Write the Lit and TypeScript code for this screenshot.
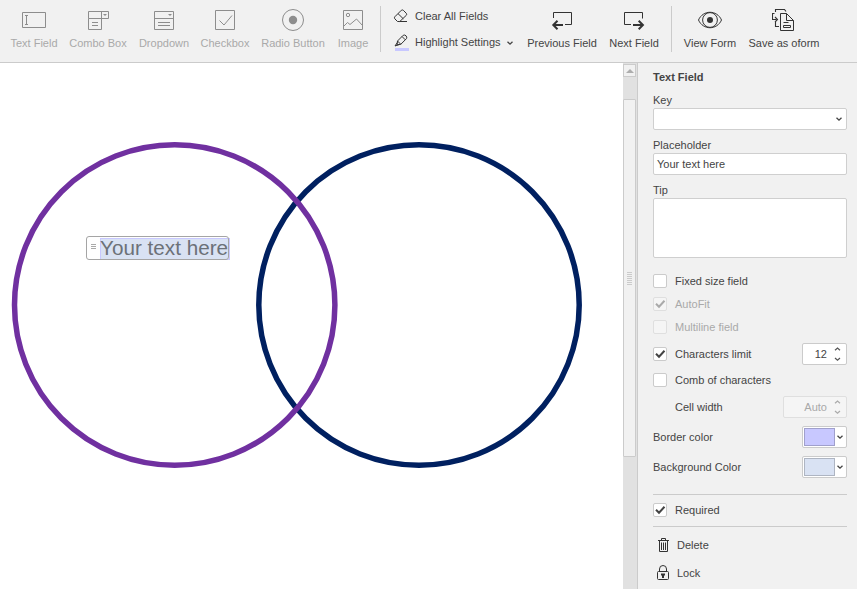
import { LitElement, html, svg, css } from "lit";
import { customElement } from "lit/decorators.js";
import { classMap } from "lit/directives/class-map.js";

const icons: Record<string, unknown> = {
  text: svg`<path d="M.5 4.500h23v15H.5zM3 7.500h3M3 16.500h3M4.500 7.500v9"/>`,
  combo: svg`<path d="M2.500 3.500h20v7h-20zM15.500 3.500v18h-13v-11M6 14.500h6M6 17.500h6"/><path class="soft" d="M17 6h4l-2 2z"/>`,
  drop: svg`<path d="M2.500 3.500h19v18h-19zM2.500 10.500h19M6 14.500h12M6 17.500h12"/><path class="soft" d="M16 6h4l-2 2z"/>`,
  check: svg`<path d="M2.500 2.500h19v19h-19z"/><path d="M6.500 12.500l4.500 4.500 8-9.500"/>`,
  radio: svg`<circle cx="12" cy="12" r="10.500"/><circle class="fill" cx="12" cy="12" r="4.200"/>`,
  image: svg`<path d="M2.500 2.500h19v19h-19z"/><circle cx="7" cy="7" r="1.700"/><path d="M3 18l3.500-3.500 2.500 2 6.500-5.500 6 6.500"/>`,
  prev: svg`<path d="M3.500 10V4.500h18v12H15"/><path class="bold" d="M13 17H4M7.500 12.800L3.300 17l4.200 4.200"/>`,
  next: svg`<path d="M9 16.500H2.500v-12h18v6"/><path class="bold" d="M11 17h9.500M16.700 12.800l4.200 4.200-4.200 4.200"/>`,
  eye: svg`<path d="M.5 12C5 1.700 19 1.700 23.500 12 19 22.300 5 22.300.5 12z"/><circle cx="12" cy="12" r="7.400"/><circle class="fill" cx="12" cy="12" r="3"/>`,
  save: svg`<path d="M8.500 5.500h6l7 7v10h-13zM14.500 5.500v7h7M11.500 14.500h5M11.500 17.500h7v2h-7z"/><path d="M14 3.500l-1.500-2h-9V4M3.500 14v4.500H7M2.500 5.500h-2v6h4M3 9l2.500 2.500L3 14" stroke-width="1.100"/>`,
};

const icon = (name: string) => html`<svg class="ico" viewBox="0 0 24 24">${icons[name]}</svg>`;

@customElement("app-root")
export class AppRoot extends LitElement {
  static styles = css`
    :host { display: flex; flex-direction: column; width: 857px; height: 589px; overflow: hidden;
      font: 11px/16px "Liberation Sans", Arial, sans-serif; color: #444; background: #fff; }
    * { box-sizing: border-box; }
    svg { display: block; fill: none; stroke: #333; flex: none; }
    .toolbar { display: flex; height: 63px; flex: none; background: #f1f1f1; border-bottom: 1px solid #cbcbcb; padding-left: 4px; }
    .tool { display: flex; flex-direction: column; align-items: center; padding-top: 8px; white-space: nowrap; }
    .tool span { margin-top: 3px; }
    .ico { width: 24px; height: 24px; }
    .ico .fill { fill: #333; stroke: none; }
    .ico .bold { stroke-width: 2; }
    .off { color: #a9a9a9; }
    .off svg { stroke: #8d8d8d; }
    .off .ico .fill { fill: #8d8d8d; }
    .off .soft { fill: #8d8d8d; stroke: none; }
    .w60 { width: 60px; } .w68 { width: 68px; } .w64 { width: 64px; } .w58 { width: 58px; }
    .w78 { width: 78px; } .w42 { width: 42px; } .w72 { width: 72px; } .w52 { width: 52px; margin-left: 10px; }
    .w56 { width: 56px; } .w76 { width: 76px; margin-left: 8px; }
    .sep { width: 1px; height: 46px; background: #cbcbcb; margin: 6px 0 0 6px; }
    .sep.two { margin: 6px 10px 0 11px; }
    .stack { width: 145px; padding: 8px 0 0 12px; display: flex; flex-direction: column; gap: 10px; }
    .small { display: flex; align-items: center; height: 16px; white-space: nowrap; }
    .small svg { margin-right: 6px; overflow: visible; }
    .small .caret { margin: 1px 0 0 6px; }
    .main { display: flex; flex: 1; min-height: 0; }
    .canvas { width: 623px; position: relative; overflow: hidden; }
    .field { position: absolute; left: 86px; top: 173px; width: 144px; height: 24px; display: flex; }
    .grip { width: 14px; display: flex; flex-direction: column; gap: 1px; padding: 8px 0 0 5px; }
    .grip i { width: 5px; height: 1px; background: #aaa; }
    .value { width: 130px; height: 22px; margin-top: 2px; background: #d9e2f3; border: 1px solid #c8c8ff;
      font-size: 20.700px; line-height: 18px; text-indent: -1px; color: #6c7178; white-space: nowrap; }
    .frame { position: absolute; inset: 0 1px 0 0; border: 1px solid #a5a5a5; border-radius: 3px; }
    .scroll { width: 14px; background: #e1e1e1; padding-top: 1px; }
    .up { width: 13px; height: 13px; border: 1px solid #cbcbcb; background: #f1f1f1; display: grid; place-items: center; }
    .up svg { fill: #adadad; stroke: none; }
    .thumb { width: 13px; height: 358px; margin-top: 22px; border: 1px solid #cbcbcb; border-radius: 1px; background: #f1f1f1;
      display: flex; flex-direction: column; align-items: center; padding-top: 172px; gap: 1px; }
    .thumb i { width: 5px; height: 1px; background: #cbcbcb; }
    .panel { width: 220px; border-left: 1px solid #cbcbcb; background: #f1f1f1; padding: 6px 10px 0 15px; }
    .title { font-weight: bold; }
    .label { margin-top: 7px; }
    .input { height: 22px; background: #fff; border: 1px solid #cfcfcf; border-radius: 2px; display: flex; align-items: center; padding-left: 3px; }
    .input.area { height: 60px; }
    .input .caret { margin: 0 4px 0 auto; }
    .row { display: flex; align-items: center; height: 22px; }
    .row.first { margin-top: 12px; } .m1 { margin-top: 1px; } .m4 { margin-top: 4px; } .m5 { margin-top: 5px; }
    .m6 { margin-top: 6px; } .m7 { margin-top: 7px; } .m8 { margin-top: 8px; }
    .box { width: 14px; height: 14px; margin-right: 8px; background: #fff; border: 1px solid #cbcbcb; border-radius: 2px; }
    .box svg { stroke-width: 2; stroke: #444; }
    .off .box, .off.spin { background: #f5f5f5; border-color: #dfdfdf; }
    .off .box svg { stroke: #aaa; }
    .spin { margin-left: auto; width: 45px; height: 22px; background: #fff; border: 1px solid #cbcbcb; border-radius: 2px;
      display: flex; align-items: center; justify-content: flex-end; padding-right: 5px; gap: 7px; }
    .spin.wide { width: 64px; }
    .spin svg { stroke: #555; stroke-width: 1.200; }
    .spin.off svg { stroke: #aaa; }
    .indent { padding-left: 22px; }
    .combo { margin-left: auto; width: 45px; height: 22px; background: #fff; border: 1px solid #cbcbcb; border-radius: 2px; display: flex; align-items: center; padding-left: 1px; }
    .combo i { width: 31px; height: 18px; background: #c8c8ff; border: 1px solid #a0a0cc; margin-right: 2px; }
    .combo i.bg { background: #d9e2f3; border-color: #aeb5c2; }
    .rule { height: 1px; background: #cbcbcb; margin-top: 5px; }
    .rule.far { margin-top: 16px; }
    .act svg { margin: 0 6px 0 2px; }
  `;

  private tool(name: string, label: string, width: string, off = false) {
    return html`<div class=${classMap({ tool: true, off, [width]: true })}>${icon(name)}<span>${label}</span></div>`;
  }

  private caret() {
    return html`<svg class="caret" width="6" height="6" viewBox="0 0 6 6"><path d="M.5 1.700L3 4.200 5.500 1.700" stroke="#444" stroke-width="1.300"/></svg>`;
  }

  private box(label: string, checked = false) {
    return html`<span class="box">${checked ? html`<svg width="12" height="12" viewBox="0 0 12 12"><path d="M2 5.800l3 3 5.500-6"/></svg>` : ""}</span>${label}`;
  }

  private arrows() {
    return html`<svg width="7" height="16" viewBox="0 0 7 16"><path d="M1 4.200L3.500 2 6 4.200M1 12l2.500 2.200L6 12"/></svg>`;
  }

  render() {
    return html`
      <div class="toolbar">
        ${this.tool("text", "Text Field", "w60", true)}
        ${this.tool("combo", "Combo Box", "w68", true)}
        ${this.tool("drop", "Dropdown", "w64", true)}
        ${this.tool("check", "Checkbox", "w58", true)}
        ${this.tool("radio", "Radio Button", "w78", true)}
        ${this.tool("image", "Image", "w42", true)}
        <div class="sep"></div>
        <div class="stack">
          <div class="small">
            <svg width="16" height="16" viewBox="0 0 16 16"><path d="M1.800 8.800L8.300 2.300q1-.8 2 0l3 3q.8 1 0 2L6.800 13.500H4.500L1.800 10.800q-.8-1 0-2zM5 5.600l5.300 5.200M6.500 13.500H14"/></svg>
            Clear All Fields
          </div>
          <div class="small">
            <svg width="16" height="16" viewBox="0 0 16 16"><path d="M4.500 7l5.700-5.700q1.500-.8 2.800.5t.5 2.800L7.800 10.300l-3.800.7zM4.500 7l3.300 3.300M9 2.500l3.300 3.300M4.300 8.500L2 12l4-1.500"/><path d="M2 15.500h14" stroke="#c8c8ff" stroke-width="3"/></svg>
            Highlight Settings ${this.caret()}
          </div>
        </div>
        ${this.tool("prev", "Previous Field", "w72")}
        ${this.tool("next", "Next Field", "w52")}
        <div class="sep two"></div>
        ${this.tool("eye", "View Form", "w56")}
        ${this.tool("save", "Save as oform", "w76")}
      </div>
      <div class="main">
        <div class="canvas">
          <svg width="623" height="526" viewBox="0 63 623 526" stroke-width="5.500">
            <circle cx="419" cy="305" r="160.200" stroke="#002060"/>
            <circle cx="174.700" cy="305" r="160.200" stroke="#7030a0"/>
          </svg>
          <div class="field">
            <div class="grip"><i></i><i></i><i></i></div>
            <div class="value">Your text here</div>
            <div class="frame"></div>
          </div>
        </div>
        <div class="scroll">
          <div class="up"><svg width="8" height="4" viewBox="0 0 8 4"><path d="M4 0l4 4H0z"/></svg></div>
          <div class="thumb"><i></i><i></i><i></i><i></i><i></i><i></i><i></i></div>
        </div>
        <div class="panel">
          <div class="title">Text Field</div>
          <div class="label">Key</div>
          <div class="input">${this.caret()}</div>
          <div class="label">Placeholder</div>
          <div class="input">Your text here</div>
          <div class="label">Tip</div>
          <div class="input area"></div>
          <div class="row first">${this.box("Fixed size field")}</div>
          <div class="row m1 off">${this.box("AutoFit", true)}</div>
          <div class="row m1 off">${this.box("Multiline field")}</div>
          <div class="row m5">${this.box("Characters limit", true)}<div class="spin">12${this.arrows()}</div></div>
          <div class="row m4">${this.box("Comb of characters")}</div>
          <div class="row m5 indent">Cell width<div class="spin wide off">Auto${this.arrows()}</div></div>
          <div class="row m8">Border color<div class="combo"><i></i>${this.caret()}</div></div>
          <div class="row m8">Background Color<div class="combo"><i class="bg"></i>${this.caret()}</div></div>
          <div class="rule far"></div>
          <div class="row m4">${this.box("Required", true)}</div>
          <div class="rule"></div>
          <div class="row m7 act">
            <svg width="16" height="16" viewBox="0 0 16 16"><path d="M3 3.500h11M6.500 3V1.500h4V3M4.500 4v10.500h8V4M6.500 5.500v7.500M8.500 5.500v7.500M10.500 5.500v7.500"/></svg>Delete
          </div>
          <div class="row m6 act">
            <svg width="16" height="16" viewBox="0 0 16 16"><rect x="2.500" y="6.500" width="11" height="8" rx="1"/><path d="M4.500 6V4q0-3.500 3.500-3.500t3.500 3.500v2"/><path fill="#333" stroke="none" d="M6 8.500h4v2H9V13H7v-2.500H6z"/></svg>Lock
          </div>
        </div>
      </div>`;
  }
}
